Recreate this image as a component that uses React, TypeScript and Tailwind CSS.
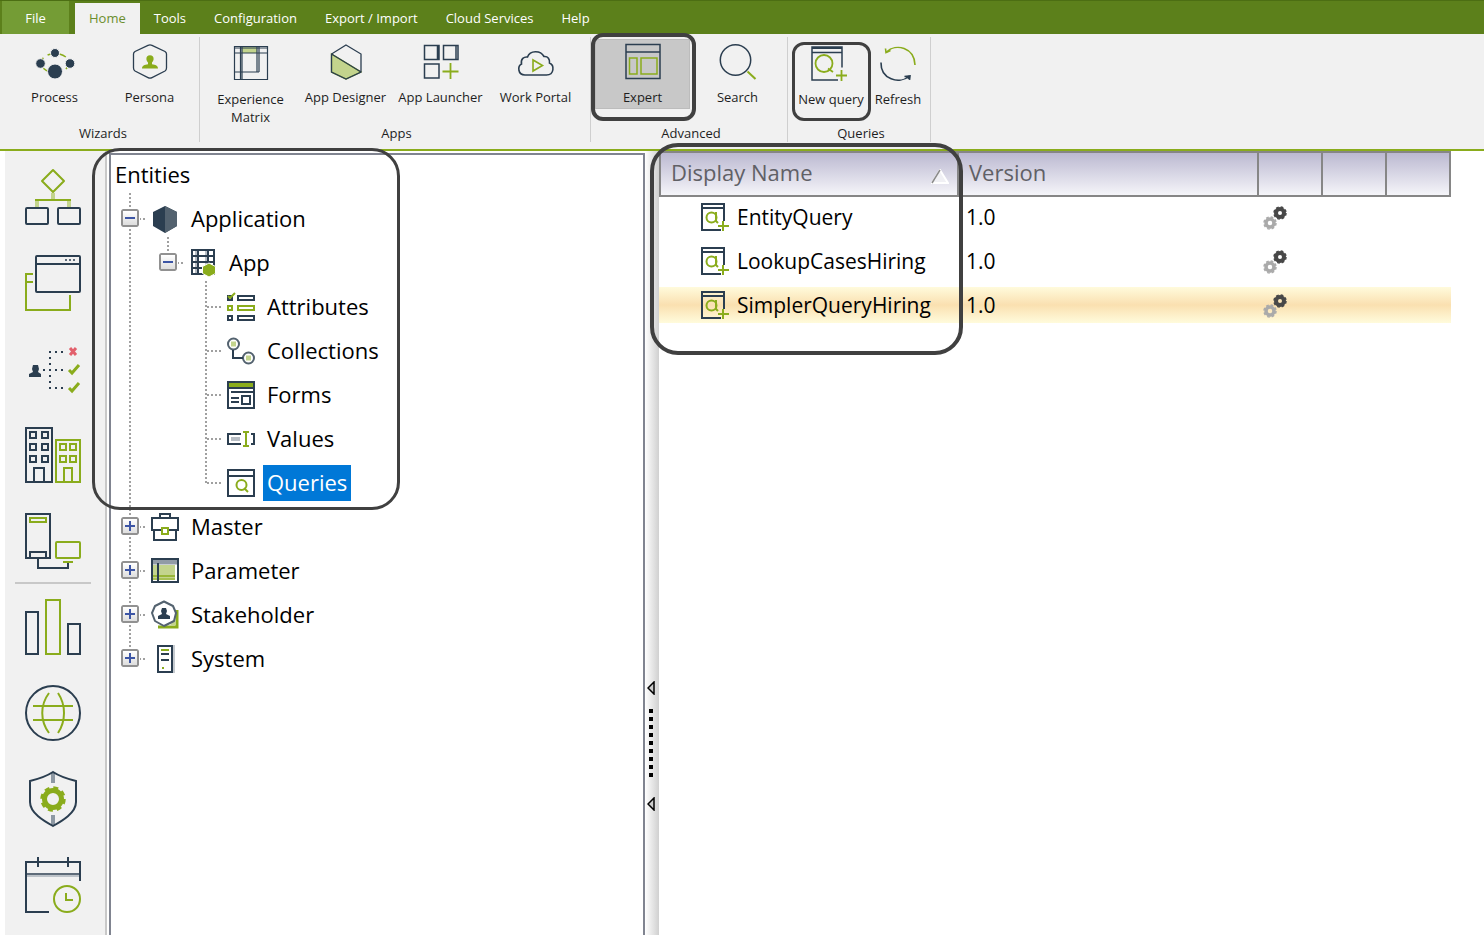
import { useState, type ReactNode } from 'react'
import clsx from 'clsx'

const NAVY = '#2b3e50'
const GREEN = '#8aac1c'
const PALE = '#c3d48d'

const MENU = ['Home', 'Tools', 'Configuration', 'Export / Import', 'Cloud Services', 'Help']

function Icon({ size, children }: { size: number; children: ReactNode }) {
  return (
    <svg
      width={size}
      height={size}
      viewBox={`0 0 ${size} ${size}`}
      fill="none"
      stroke={NAVY}
      strokeWidth={2}
      className="block shrink-0 overflow-visible"
      aria-hidden="true"
    >
      {children}
    </svg>
  )
}

const RIBBON_ICONS: Record<string, ReactNode> = {
  process: (
    <g>
      <ellipse cx="18" cy="20" rx="14" ry="9.5" stroke={GREEN} strokeWidth="1.5" strokeDasharray="7 5" />
      <g fill={NAVY} stroke="#f1f1f1" strokeWidth="1">
        <circle cx="18" cy="10" r="4.5" />
        <circle cx="3.5" cy="20.5" r="4.8" />
        <circle cx="33" cy="20.5" r="4.8" />
        <circle cx="18" cy="28.5" r="7.5" />
      </g>
    </g>
  ),
  persona: (
    <g>
      <path
        d="M16 2.3 Q18 1.3 20 2.3 L33 8.5 Q34.5 9.5 34.5 11 V25 Q34.5 27 33 28 L20 34.7 Q18 35.7 16 34.7 L3 28 Q1.5 27 1.5 25 V11 Q1.5 9.5 3 8.5 Z"
        strokeWidth="1.3"
      />
      <path
        d="M18 12.2a3.6 3.6 0 0 1 3.6 3.6c0 1.6-.7 2.8-1.6 3.6v1.8c3.5.5 6 1.5 6 4.3H10c0-2.800 2.500-3.800 6-4.300v-1.800c-.9-.8-1.600-2-1.600-3.600a3.600 3.600 0 0 1 3.600-3.600z"
        fill={GREEN}
        stroke="none"
      />
    </g>
  ),
  matrix: (
    <g strokeWidth="1.2">
      <path d="M9 2h15v6H9z" fill={PALE} stroke="none" />
      <path d="M1.5 1.5h33v33h-33zM1.5 8h33M9 1.5v33M7.5 1.5v33M24 1.5V27M26 1.5V27M1.5 27H26M1.5 3h33" />
    </g>
  ),
  designer: (
    <g strokeWidth="1.3">
      <path d="M3.5 11 33 29 18 36 3.5 29z" fill={PALE} stroke={GREEN} />
      <path d="M18 2 33 11V29L18 36 3.5 29V11zM3.5 11 33 29" />
    </g>
  ),
  launcher: (
    <g strokeWidth="1.5">
      <path d="M1.5 2.5H16v14H1.5zM20.5 2.5H35v14H20.5zM1.5 21H16v14H1.5zM14.5 2v14M33 2v14" />
      <path d="M27.5 20v16M19.5 28.5h16" stroke={GREEN} strokeWidth="1.8" />
    </g>
  ),
  portal: (
    <g strokeWidth="1.6">
      <path d="M7 32C-.5 32-.5 23 3.5 21 2.5 16 6 13.5 9.5 14 12 7 22.5 7 26 13.5 30 13 32 16.5 31.5 20 36.5 22 36.5 32 28.5 32z" />
      <path d="M15 17v11l9.5-5.5z" stroke={GREEN} />
    </g>
  ),
  expert: (
    <g strokeWidth="1.5">
      <path d="M1 1.5h34v34H1zM1 9h34" />
      <path d="M4.5 15H12v16H4.5zM16 15h16v16H16z" stroke={GREEN} />
    </g>
  ),
  search: (
    <g strokeWidth="1.5">
      <circle cx="15.5" cy="17" r="15.2" />
      <path d="m27.5 28.5 8 7.5" stroke={GREEN} strokeWidth="2" />
    </g>
  ),
  newQuery: (
    <g strokeWidth="1.5">
      <path d="M29 22.500V2H-1v33h26M-1 7.500h30M-1 3.200h30" />
      <g stroke={GREEN} strokeWidth="1.8">
        <circle cx="11" cy="18.5" r="8.5" />
        <path d="m15 23.500 5 3.500M28.500 25v11M23 30.500h11" />
      </g>
    </g>
  ),
  refresh: (
    <g strokeWidth="1.6">
      <path d="M6.500 7C16-2 34.500 2.500 35 20" stroke={GREEN} />
      <path d="M10.500 5.500 6 7.500 5.500 3.500" stroke={GREEN} />
      <path d="M1 17.500C.5 34 19 40 29.500 31" />
      <path d="m24.500 31.500 5.500-.7-.5 4" fill={NAVY} />
    </g>
  ),
}

type RibbonItem = { label: string; icon: string; low?: boolean; active?: boolean; width?: string; boxed?: string }

const RIBBON: { name: string; className: string; items: RibbonItem[] }[] = [
  {
    name: 'Wizards',
    className: 'w-[200px] pl-[7px]',
    items: [
      { label: 'Process', icon: 'process' },
      { label: 'Persona', icon: 'persona' },
    ],
  },
  {
    name: 'Apps',
    className: 'w-[391px] pl-[3px]',
    items: [
      { label: 'Experience Matrix', icon: 'matrix', low: true },
      { label: 'App Designer', icon: 'designer' },
      { label: 'App Launcher', icon: 'launcher' },
      { label: 'Work Portal', icon: 'portal' },
    ],
  },
  {
    name: 'Advanced',
    className: 'w-[197px] pl-1',
    items: [
      { label: 'Expert', icon: 'expert', active: true, boxed: '-left-1 -top-1.5 h-[88px] w-[105px] border-4' },
      { label: 'Search', icon: 'search' },
    ],
  },
  {
    name: 'Queries',
    className: 'w-[143px] pl-1',
    items: [
      {
        label: 'New query',
        icon: 'newQuery',
        low: true,
        width: 'w-[78px]',
        boxed: 'left-0 top-[3px] h-[79px] w-[79px] border-[3px]',
      },
      { label: 'Refresh', icon: 'refresh', low: true, width: 'w-14' },
    ],
  },
]

function Ribbon() {
  return (
    <div className="flex h-[117px] border-b-2 border-[#8aac1c] bg-[#f1f1f1] pt-[3px]">
      {RIBBON.map((group) => (
        <section key={group.name} className={clsx('flex h-[105px] flex-col border-r border-[#cfcfcf]', group.className)}>
          <div className="flex flex-1 pt-0.5">
            {group.items.map((item) => (
              <div key={item.label} className="relative">
                <button
                  type="button"
                  className={clsx(
                    'flex h-[70px] flex-col items-center text-[13px] leading-[18px] text-[#1e1e1e]',
                    item.low ? 'pt-1.5' : 'pt-1',
                    item.active && 'border border-[#bcbcbc] bg-[#c8c8c8] pt-[3px]',
                    item.width ?? 'w-[95px]',
                  )}
                >
                  <Icon size={36}>{RIBBON_ICONS[item.icon]}</Icon>
                  <span className="mt-[9px]">{item.label}</span>
                </button>
                {item.boxed && (
                  <span className={clsx('pointer-events-none absolute z-10 rounded-xl border-[#404040]', item.boxed)} />
                )}
              </div>
            ))}
          </div>
          <h2 className="text-center text-[13px] leading-[18px] text-[#1e1e1e]">{group.name}</h2>
        </section>
      ))}
    </div>
  )
}

const MODULES: { name: string; icon: ReactNode }[] = [
  {
    name: 'Process modeler',
    icon: (
      <g>
        <path d="M28 24v6M12 32v6M44 32v6" stroke={PALE} strokeWidth="4" />
        <path d="m28 1 11 11-11 11-11-11zM10 31h36" stroke={GREEN} strokeLinejoin="round" />
        <rect x="1" y="39" width="22" height="16" rx="1" />
        <rect x="33" y="39" width="22" height="16" rx="1" />
      </g>
    ),
  },
  {
    name: 'Forms',
    icon: (
      <g>
        <path d="M8 19H1V55H45V40M1 27h7" stroke={GREEN} />
        <rect x="11" y="1" width="44" height="36" rx="1" />
        <path d="M11 9h44" />
        <path d="M40 5h10" strokeDasharray="2 2" stroke="#5e6b79" />
      </g>
    ),
  },
  {
    name: 'Rules',
    icon: (
      <g>
        <path d="M4 36v-3l4-2-1-3 1-4h5l1 4-1 3 3 2v3z" fill={NAVY} stroke="none" />
        <path d="M25 10v38M30 11h8M18 29h20M30 47h8" strokeDasharray="2 4" />
        <path d="m45 7 6 7m0-7-6 7" stroke="#e2606c" strokeWidth="3" />
        <path d="m44 29 3 3 7-8M44 47l3 3 7-8" stroke={GREEN} strokeWidth="3" />
      </g>
    ),
  },
  {
    name: 'Organization',
    icon: (
      <g>
        <path d="M1 1h26v54H1zM5 5h6v6H5zM17 5h6v6h-6zM5 17h6v6H5zM17 17h6v6h-6zM5 29h6v6H5zM17 29h6v6h-6zM9 55V41h10v14" />
        <path
          d="M31 13h24v42H31zM35 17h6v6h-6zM45 17h6v6h-6zM35 29h6v6h-6zM45 29h6v6h-6zM39 55V41h8v14"
          stroke={GREEN}
        />
      </g>
    ),
  },
  {
    name: 'Integration',
    icon: (
      <g>
        <path d="M1 1h24v44H1zM5 45v-6h16v6M13 46v9h30v-5" />
        <path d="M5 5h16v4H5zM38 49h10" stroke={GREEN} />
        <rect x="31" y="29" width="24" height="16" rx="1" stroke={GREEN} />
      </g>
    ),
  },
  {
    name: 'Reports',
    icon: (
      <g>
        <path d="M1 13h12v42H1zM43 25h12v30H43z" />
        <path d="M21 1h14v54H21z" stroke={GREEN} />
      </g>
    ),
  },
  {
    name: 'Localization',
    icon: (
      <g>
        <circle cx="28" cy="28" r="27" />
        <path d="M8 21h40M8 35h40M24 8c-9 12-9 28 0 40M33 8c8 12 8 28 0 40" stroke={GREEN} />
      </g>
    ),
  },
  {
    name: 'Security',
    icon: (
      <g>
        <path d="M28 1v11M28 44v11" stroke="#8d98a3" strokeWidth="4" />
        <path d="M28 1C22 5 13 8 5 10V31C5 42 19 50 28 55 37 50 51 42 51 31V10C43 8 34 5 28 1z" />
        <circle cx="28" cy="28" r="8.5" stroke={GREEN} strokeWidth="5" />
        <circle cx="28" cy="28" r="11.5" stroke={GREEN} strokeWidth="2.5" strokeDasharray="5 4.030" />
      </g>
    ),
  },
  {
    name: 'Scheduler',
    icon: (
      <g>
        <path d="M2 17h52" stroke="#5e6b79" />
        <path d="M2 19h52" stroke="#bcc2c8" />
        <path d="M24 55H1V5h54v19M13 0v10M43 0v10" />
        <circle cx="42" cy="42" r="13" stroke={GREEN} />
        <path d="M41 36v7h7" stroke={GREEN} />
      </g>
    ),
  },
]

function ModuleBar() {
  return (
    <nav className="ml-[5px] w-[102px] shrink-0 border-r-2 border-[#c8c8c8] bg-[#f1f1f1] pt-[3px]">
      {MODULES.map((m, i) => (
        <div key={m.name}>
          <button type="button" aria-label={m.name} className="flex h-[86px] w-full items-center pl-5">
            <Icon size={56}>{m.icon}</Icon>
          </button>
          {i === 4 && <hr className="-mt-0.5 mr-3.5 ml-2.5 h-0.5 border-0 bg-[#c8c8c8]" />}
        </div>
      ))}
    </nav>
  )
}

const ENTITY_ICONS: Record<string, ReactNode> = {
  Application: (
    <g stroke="none">
      <path d="M14 1 26 7v14l-12 7-12-7V7z" fill={NAVY} />
      <path d="M14 1 26 7v14l-12 7z" fill="#53626f" />
    </g>
  ),
  App: (
    <g>
      <path d="M8 1v24M18 1v24" stroke="#b8bec5" strokeWidth="4" />
      <path d="M3 1h22v24H3zM3 7h22M3 13h22M3 19h22M9 1v24M19 1v24" />
      <path d="m20 14 6.500 3.500v7L20 28l-6.500-3.500v-7z" fill={GREEN} stroke="#fff" strokeWidth="1" />
    </g>
  ),
  Attributes: (
    <g>
      <path d="M11 3h16v4H11zM11 23h16v4H11zM1 23h4v4H1zM1 3h4v4H1z" />
      <path d="M11 13h16v4H11zM1 13h4v4H1zM1 3l2 2 5-5" stroke={GREEN} />
    </g>
  ),
  Collections: (
    <g>
      <circle cx="6.5" cy="7" r="5.5" stroke="#53626f" />
      <circle cx="21.5" cy="21" r="5.5" stroke="#53626f" />
      <path d="M6 13v8h10" />
      <path d="M4 4.500h5v5H4zM19 18.500h5v5h-5z" fill={PALE} stroke="none" />
    </g>
  ),
  Forms: (
    <g>
      <path d="M1 1h26v26H1z" />
      <path d="M2 2h24v4H2z" fill={GREEN} stroke="none" />
      <path d="M2 7h24M4 11h22M4 17h8M4 21h8M15 15h8v8h-8z" />
    </g>
  ),
  Values: (
    <g>
      <path d="M4 14h9" stroke="#b8bec5" strokeWidth="4" />
      <path d="M14 9H1v10h13M24 9h3v10h-3" />
      <path d="M16 7h6M16 21h6M19 7v14" stroke={GREEN} />
    </g>
  ),
  Queries: (
    <g>
      <path d="M1 1h26v26H1zM1 7h26" />
      <circle cx="14.5" cy="16" r="5" stroke={GREEN} />
      <path d="m17 19 4 4" stroke={GREEN} />
    </g>
  ),
  Master: (
    <g>
      <path d="M9 5V1h10v4M1 5h26v12H1zM3 17v10h22V17" />
      <path d="M11 15h6v6h-6z" stroke={GREEN} fill="#fff" />
    </g>
  ),
  Parameter: (
    <g>
      <path d="M1 5h26" stroke="#919ba6" strokeWidth="5" />
      <path d="M2 8h22v13H2z" fill={PALE} stroke="none" />
      <path d="M2 19h22M2 22h22" stroke={GREEN} strokeWidth="1.5" />
      <path d="M1 2h26v23H1zM7 6v18" />
    </g>
  ),
  Stakeholder: (
    <g>
      <path d="M7 26h19V9" stroke={GREEN} strokeWidth="3" />
      <path d="M19 24h6v-7z" fill={PALE} stroke="none" />
      <path d="M13 0.500 22 5l3 7-2 8-10 5-9-5-3-8 3-7z" fill="#fff" stroke="#53626f" strokeLinejoin="round" />
      <path d="M7 18v-3l4-2-1-3 1-3h4l1 3-1 3 4 2v3z" fill={NAVY} stroke="none" />
    </g>
  ),
  System: (
    <g>
      <path d="M23 0v28" stroke="#c5cacf" />
      <path d="M7 1h14v26H7zM10 9h8M10 15h8" />
      <path d="M10 5h8M11 23h2" stroke={GREEN} />
    </g>
  ),
}

// one 38px guide cell per level: '|' passes through, '+' branches, 'L' ends
const TREE: { label: string; guides: string; toggle?: 'open' | 'closed' }[] = [
  { label: 'Application', guides: '+', toggle: 'open' },
  { label: 'App', guides: '|L', toggle: 'open' },
  { label: 'Attributes', guides: '| +' },
  { label: 'Collections', guides: '| +' },
  { label: 'Forms', guides: '| +' },
  { label: 'Values', guides: '| +' },
  { label: 'Queries', guides: '| L' },
  { label: 'Master', guides: '+', toggle: 'closed' },
  { label: 'Parameter', guides: '+', toggle: 'closed' },
  { label: 'Stakeholder', guides: '+', toggle: 'closed' },
  { label: 'System', guides: 'L', toggle: 'closed' },
]

function Guide({ kind }: { kind: string }) {
  return (
    <svg
      width="38"
      height="44"
      className="col-start-1 row-start-1 overflow-visible"
      stroke="#a0a0a0"
      strokeWidth="2"
      strokeDasharray="2 2"
    >
      {kind !== ' ' && <path d={kind === 'L' ? 'M19-4v26' : 'M19-4v48'} />}
      {(kind === '+' || kind === 'L') && <path d="M20 22h16" />}
    </svg>
  )
}

function EntityTree() {
  const [selected, setSelected] = useState('Queries')

  return (
    <div className="relative mt-0.5 ml-0.5 w-[536px] shrink-0 border-2 border-b-0 border-[#808490] bg-white text-[22px] text-black">
      <h1 className="h-[42px] pl-1 leading-[38px]">Entities</h1>
      <ul>
        {TREE.map((node) => (
          <li key={node.label} className="flex h-11 items-center">
            {node.guides.split('').map((kind, i) => (
              <span key={i} className="grid w-[38px] shrink-0 place-items-center">
                <Guide kind={kind} />
                {node.toggle && i === node.guides.length - 1 && (
                  <button
                    type="button"
                    aria-label={`Toggle ${node.label}`}
                    className="col-start-1 row-start-1 mb-0.5 flex size-[18px] items-center justify-center rounded-xs border-2 border-[#919191] bg-linear-to-b from-white to-[#dedede] outline-1 outline-white"
                  >
                    <svg width="10" height="10" stroke="#3c55a5" strokeWidth="2">
                      <path d={node.toggle === 'open' ? 'M0 5h10' : 'M0 5h10M5 0v10'} />
                    </svg>
                  </button>
                )}
              </span>
            ))}
            <span className="ml-0.5">
              <Icon size={28}>{ENTITY_ICONS[node.label]}</Icon>
            </span>
            <button
              type="button"
              onClick={() => setSelected(node.label)}
              className={clsx('ml-2 h-9 px-1 pb-0.5 leading-[34px]', selected === node.label && 'bg-[#0078d7] text-white')}
            >
              {node.label}
            </button>
          </li>
        ))}
      </ul>
      <span className="pointer-events-none absolute -top-[7px] -left-[19px] z-10 h-[362px] w-[308px] rounded-[28px] border-[3px] border-[#404040]" />
    </div>
  )
}

function CollapseButton({ label }: { label: string }) {
  return (
    <button type="button" aria-label={label}>
      <svg width="8" height="14" className="block">
        <path d="M7 1v12L1 7z" fill="#ccc" stroke="#000" strokeWidth="1.5" />
      </svg>
    </button>
  )
}

function Splitter() {
  return (
    <div className="flex w-3.5 shrink-0 flex-col items-center justify-end gap-3.5 bg-linear-to-r from-white to-[#d0d0d0] pr-0.5 pb-[124px]">
      <CollapseButton label="Collapse left" />
      <div className="flex flex-col gap-1 pb-1.5">
        {Array.from({ length: 9 }, (_, i) => (
          <span key={i} className="size-1 bg-black" />
        ))}
      </div>
      <CollapseButton label="Collapse right" />
    </div>
  )
}

const QUERIES = [
  { name: 'EntityQuery', version: '1.0' },
  { name: 'LookupCasesHiring', version: '1.0' },
  { name: 'SimplerQueryHiring', version: '1.0' },
]

function QueryIcon() {
  return (
    <Icon size={28}>
      <path d="M23 18V1H1v26h19M1 5h22" />
      <g stroke={GREEN}>
        <circle cx="10.5" cy="14.5" r="5" />
        <path d="M15 9v9l2 2M22 18v10M17 23h11" />
      </g>
    </Icon>
  )
}

function Gears() {
  return (
    <Icon size={24}>
      <circle cx="17" cy="8" r="4" stroke="#484848" strokeWidth="4" />
      <circle cx="17" cy="8" r="6" stroke="#484848" strokeWidth="1.5" strokeDasharray="2.700 2.010" />
      <circle cx="7" cy="18" r="4" stroke="#aaa" strokeWidth="3.5" />
      <circle cx="7" cy="18" r="6" stroke="#aaa" strokeWidth="1.5" strokeDasharray="2.700 2.010" />
    </Icon>
  )
}

function QueryTable() {
  const [active, setActive] = useState('SimplerQueryHiring')
  const th = 'h-[46px] border-y-2 border-r-2 border-[#868686] pb-1 text-left font-normal'
  const cell = (name: string) =>
    clsx('flex h-9 items-center', active === name && 'bg-linear-to-b from-[#fffbdc] via-[#fae0b0] to-[#fffbdc]')

  return (
    <div className="relative mr-[33px] min-w-0 flex-1">
      <table className="w-full table-fixed border-separate border-spacing-0 text-[21px] text-black">
        <thead>
          <tr className="bg-linear-to-b from-[#b9b6cf] to-[#f8f8fb] text-[22px] text-[#606066]">
            <th className={clsx(th, 'w-[300px] border-l-2 pl-2.5')}>
              <div className="flex items-center justify-between pr-2">
                Display Name
                <svg width="18" height="15" className="mt-2">
                  <path d="M9 1 17 14H1z" fill="#f0f0f4" stroke="#fff" strokeWidth="2" />
                  <path d="M9 1 1 14" stroke="#8a8a8a" strokeWidth="1.5" />
                </svg>
              </div>
            </th>
            <th className={clsx(th, 'pl-2.5')}>Version</th>
            <th className={clsx(th, 'w-16')} />
            <th className={clsx(th, 'w-16')} />
            <th className={clsx(th, 'w-16')} />
          </tr>
        </thead>
        <tbody>
          {QUERIES.map((q) => (
            <tr key={q.name} onClick={() => setActive(q.name)}>
              <td className="px-0 pt-0.5 pb-1.5">
                <div className={clsx(cell(q.name), 'gap-2 pl-[42px]')}>
                  <QueryIcon />
                  <span className="pt-0.5">{q.name}</span>
                </div>
              </td>
              <td className="px-0 pt-0.5 pb-1.5">
                <div className={clsx(cell(q.name), 'pt-0.5 pl-[7px]')}>{q.version}</div>
              </td>
              <td className="px-0 pt-0.5 pb-1.5">
                <div className={clsx(cell(q.name), 'pl-1')}>
                  <Gears />
                </div>
              </td>
              <td className="px-0 pt-0.5 pb-1.5">
                <div className={cell(q.name)} />
              </td>
              <td className="px-0 pt-0.5 pb-1.5">
                <div className={cell(q.name)} />
              </td>
            </tr>
          ))}
        </tbody>
      </table>
      <span className="pointer-events-none absolute -top-2 -left-[9px] z-10 h-[212px] w-[313px] rounded-[28px] border-4 border-[#404040]" />
    </div>
  )
}

export default function App() {
  return (
    <div className="flex min-h-screen flex-col bg-white font-['Open_Sans','Noto_Sans',sans-serif]">
      <header className="flex h-[34px] items-stretch border-t border-[#4c6e13] bg-[#5c801b] text-[13px] text-white">
        <button type="button" className="mr-1.5 ml-0.5 w-[67px] bg-[#749c35] pt-0.5">
          File
        </button>
        {MENU.map((item) => (
          <button
            key={item}
            type="button"
            className={clsx('px-3.5 pt-0.5', item === 'Home' && 'mt-0.5 bg-[#f1f1f1] pb-0.5 text-[#6b8e2e]')}
          >
            {item}
          </button>
        ))}
      </header>
      <Ribbon />
      <main className="flex flex-1">
        <ModuleBar />
        <EntityTree />
        <Splitter />
        <QueryTable />
      </main>
    </div>
  )
}
